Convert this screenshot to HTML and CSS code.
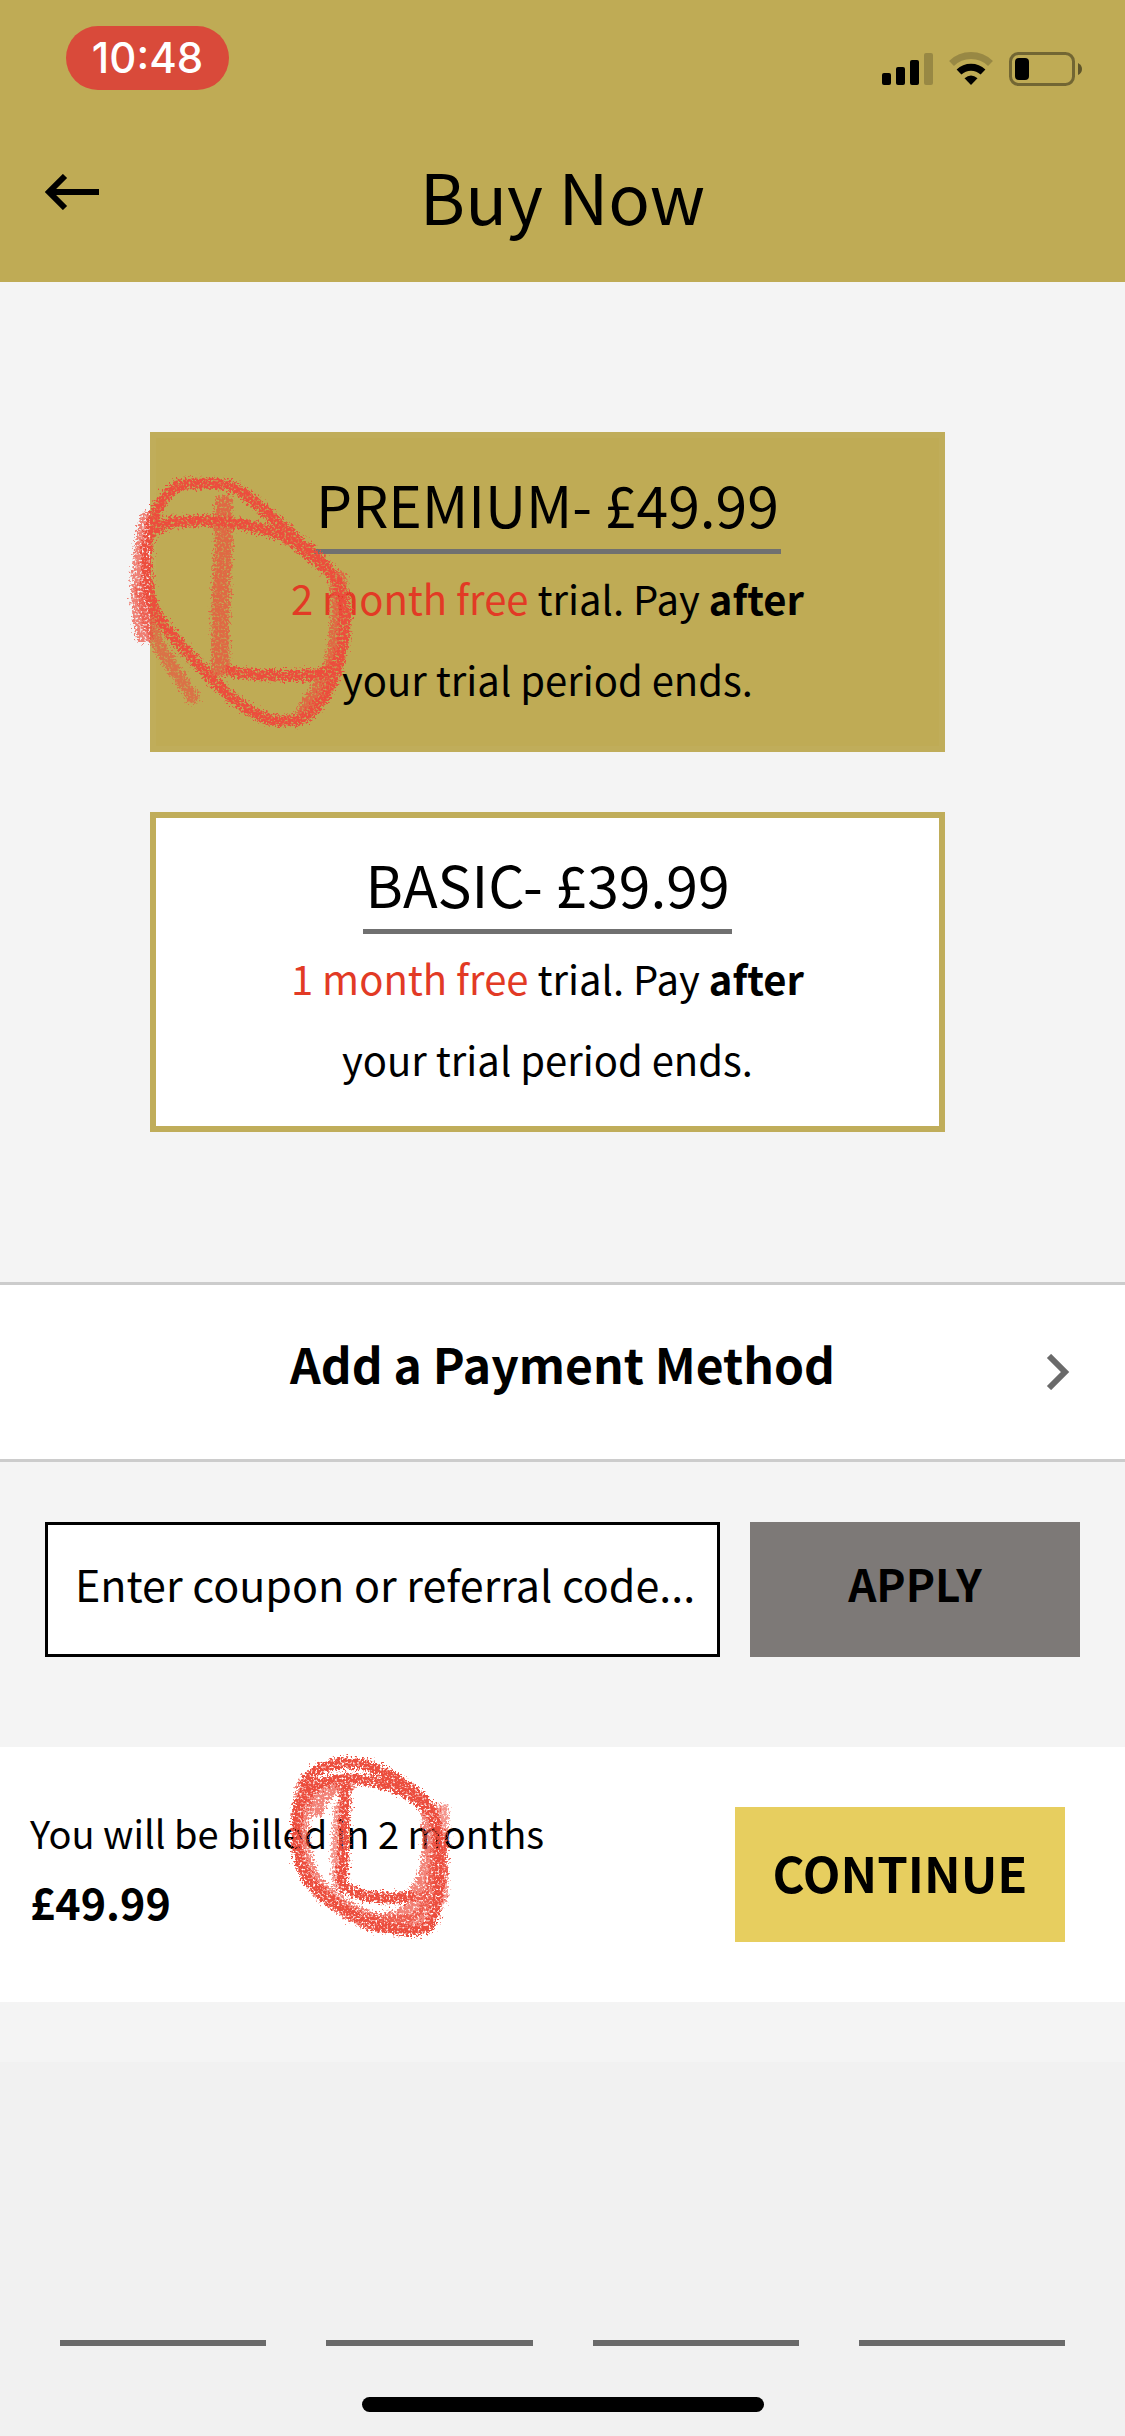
FILE: index.html
```html
<!DOCTYPE html>
<html lang="en">
<head>
<meta charset="utf-8">
<meta name="viewport" content="width=device-width, initial-scale=1">
<title>Buy Now</title>
<link rel="stylesheet" href="styles.css">
</head>
<body>
<div class="page">
  <header class="header">
    <div class="status">
      <span class="clock">10:48</span>
      <div class="status-icons">
        <svg width="51" height="34" viewBox="0 0 51 34" aria-hidden="true">
          <rect x="0" y="21" width="9" height="12" rx="2"/>
          <rect x="14" y="15" width="9" height="18" rx="2"/>
          <rect x="28" y="8" width="9" height="25" rx="2"/>
          <rect x="42" y="1" width="9" height="32" rx="2" opacity=".2"/>
        </svg>
        <svg width="44" height="34" viewBox="0 0 44 34" aria-hidden="true">
          <path d="M2.500 11.500 A28 28 0 0 1 41.500 11.500" fill="none" stroke="#000" stroke-width="7" opacity=".2"/>
          <path d="M10 20 A17.500 17.500 0 0 1 34 20" fill="none" stroke="#000" stroke-width="7"/>
          <path d="M22 33 L15.500 26.300 Q22 20.500 28.500 26.300 Z"/>
        </svg>
        <svg width="73" height="34" viewBox="0 0 73 34" aria-hidden="true">
          <rect x="1.500" y="1.500" width="63" height="31" rx="8" fill="none" stroke="#000" stroke-width="3" opacity=".4"/>
          <rect x="6" y="6" width="14" height="22" rx="4"/>
          <path d="M69 11 Q73 13 73 17 Q73 21 69 23 Z" opacity=".5"/>
        </svg>
      </div>
    </div>
    <div class="titlebar">
      <button class="back" type="button" aria-label="Back">
        <svg width="54" height="36" viewBox="0 0 54 36" aria-hidden="true">
          <path d="M54 18 H5 M20 2 L4 18 L20 34" fill="none" stroke="#000" stroke-width="6"/>
        </svg>
      </button>
      <h1 class="title">Buy Now</h1>
    </div>
  </header>

  <main class="main">
    <section class="plans">
      <div class="plan-slot">
        <button class="plan plan-selected" type="button">
          <span class="plan-name">PREMIUM- £49.99</span>
          <span class="plan-text"><span class="free">2 month free</span> trial. Pay <b>after</b><br>your trial period ends.</span>
        </button>
        <svg class="mark mark-plan" width="260" height="270" viewBox="120 465 260 270" aria-hidden="true">
          <defs>
            <filter id="crayon" x="-10%" y="-10%" width="120%" height="120%" color-interpolation-filters="sRGB">
              <feTurbulence type="fractalNoise" baseFrequency="0.45" numOctaves="2" seed="4" result="noise"/>
              <feDisplacementMap in="SourceGraphic" in2="noise" scale="14" xChannelSelector="R" yChannelSelector="G" result="rough"/>
              <feColorMatrix in="noise" type="matrix" values="0 0 0 0 0  0 0 0 0 0  0 0 0 0 0  0 0 4 0 -0.900" result="grain"/>
              <feComposite in="rough" in2="grain" operator="in"/>
            </filter>
          </defs>
          <g filter="url(#crayon)">
            <path class="solid" d="M151 535 C158 523 170 522 190 521 C215 519 250 524 276 533 C292 539 310 555 325 568 C345 585 347 605 345 625 C344 650 340 665 325 673 C300 677 250 676 230 671"/>
            <path class="solid" d="M146 560 C148 520 160 495 180 485 C195 482 220 483 231 486 C250 495 275 520 300 542 C325 562 343 580 344 610 C345 640 340 675 322 700 C310 715 302 722 288 721 C265 722 245 710 225 692 C200 667 175 640 160 620 C150 605 147 590 146 550"/>
            <path class="wide" d="M224 504 C225 550 218 600 221 668"/>
            <path class="wide" d="M149 520 C139 560 138 600 144 634"/>
            <path class="wide" d="M338 580 C342 610 340 650 328 676 L306 712"/>
            <path class="soft" d="M143 590 C146 630 160 650 193 697"/>
          </g>
        </svg>
      </div>
      <button class="plan" type="button">
        <span class="plan-name">BASIC- £39.99</span>
        <span class="plan-text"><span class="free">1 month free</span> trial. Pay <b>after</b><br>your trial period ends.</span>
      </button>
    </section>

    <button class="payment" type="button">
      <span>Add a Payment Method</span>
      <svg class="chevron" width="24" height="36" viewBox="0 0 24 36" aria-hidden="true">
        <path d="M3 2 L19 18 L3 34" fill="none" stroke="#6a6a6a" stroke-width="6"/>
      </svg>
    </button>

    <form class="coupon">
      <input class="code" type="text" aria-label="Coupon or referral code" placeholder="Enter coupon or referral code...">
      <button class="apply" type="button">APPLY</button>
    </form>

    <section class="billing">
      <div class="bill">
        <p class="bill-note">You will be billed in 2 months</p>
        <p class="bill-price">£49.99</p>
      </div>
      <button class="continue" type="button">CONTINUE</button>
      <svg class="mark mark-bill" width="190" height="205" viewBox="280 1745 190 205" aria-hidden="true">
        <g filter="url(#crayon)">
          <path class="solid" d="M305 1785 C315 1768 325 1764 345 1763 C375 1762 395 1778 412 1790 C430 1803 438 1820 439 1845 C440 1880 439 1912 430 1924 C424 1932 405 1932 385 1927 C355 1919 325 1900 309 1880 C298 1862 295 1840 297 1815 C300 1790 325 1777 352 1779 C385 1780 415 1793 430 1812"/>
          <path class="solid" d="M345 1787 C346 1830 341 1870 343 1885 C352 1896 380 1900 410 1897"/>
          <path class="wide" d="M308 1782 C295 1820 298 1860 314 1882 C330 1902 350 1912 372 1922"/>
          <path class="wide" d="M316 1808 C318 1795 330 1786 348 1782"/>
          <path class="wide" d="M430 1812 C434 1850 430 1880 418 1892"/>
          <path class="wide" d="M439 1850 C438 1880 436 1908 420 1920 C400 1926 385 1925 370 1922"/>
          <path class="wide" d="M424 1900 C412 1914 400 1920 384 1922"/>
          <path class="soft" d="M340 1808 C338 1850 336 1870 340 1884"/>
          <path class="soft" d="M442 1810 L441 1900"/>
        </g>
      </svg>
    </section>
  </main>

  <footer class="footer">
    <nav class="tabs" aria-label="Sections">
      <span class="tab"></span><span class="tab"></span><span class="tab"></span><span class="tab"></span>
    </nav>
    <div class="home"></div>
  </footer>
</div>
</body>
</html>
```
FILE: styles.css
```css
* { box-sizing: border-box; }

body {
  margin: 0;
  background: #f4f4f4;
  color: #000;
  font-family: "Noto Sans CJK JP", "Noto Sans", sans-serif;
}

button, input {
  margin: 0;
  padding: 0;
  border: 0;
  border-radius: 0;
  background: none;
  color: inherit;
  font: inherit;
}

button { cursor: pointer; }
h1, p { margin: 0; }
svg { display: block; }

.page {
  display: flex;
  flex-direction: column;
  min-height: 100vh;
}

/* Header */
.header {
  padding-bottom: 39px;
  background: #bfab55;
}

.status {
  display: flex;
  justify-content: space-between;
  padding: 26px 43px 0 66px;
}

.clock {
  width: 163px;
  height: 64px;
  border-radius: 32px;
  background: #d94a3a;
  color: #fff;
  font: 500 42px/64px Inter, sans-serif;
  text-align: center;
}

.status-icons {
  display: flex;
  gap: 16px;
  padding-top: 26px;
}

.titlebar {
  display: grid;
  grid-template-columns: 1fr auto 1fr;
  align-items: start;
  margin-top: 57px;
  padding: 0 45px;
}

.back {
  display: flex;
  align-items: center;
  justify-self: start;
  height: 90px;
}

.title {
  font-size: 69px;
  font-weight: 400;
  line-height: 96px;
}

/* Plans */
.plans {
  display: flex;
  flex-direction: column;
  gap: 60px;
  padding: 150px 180px 150px 150px;
}

.plan-slot { position: relative; }

.plan {
  display: flex;
  flex-direction: column;
  align-items: center;
  gap: 4px;
  width: 100%;
  padding: 25px 24px 26px;
  border: 6px solid #c0ad5a;
  background: #fff;
}

.plan-selected { background: #bfab55; }

.plan-name {
  padding: 0 2px 6px;
  border-bottom: 5px solid #707070;
  font-size: 57px;
  line-height: 80px;
}

.plan-text {
  font-size: 40px;
  line-height: 81px;
}

.free { color: #e23a25; }

/* Hand-drawn marks over the page */
.mark {
  position: absolute;
  pointer-events: none;
}

.mark path {
  fill: none;
  stroke: #ec4d3d;
  stroke-linecap: round;
  stroke-linejoin: round;
}

.mark .solid { stroke-width: 11px; }
.mark .wide { stroke-width: 18px; opacity: .7; }
.mark .soft { stroke-width: 13px; opacity: .6; }
.mark-plan { left: -30px; top: 33px; }
.mark-bill { left: 280px; top: -2px; }

/* Payment method */
.payment {
  display: grid;
  grid-template-columns: 1fr auto 1fr;
  align-items: center;
  width: 100%;
  height: 180px;
  padding: 0 55px;
  border-top: 3px solid #ccc;
  border-bottom: 3px solid #ccc;
  background: #fff;
  font-size: 48px;
  font-weight: 700;
}

.payment span {
  grid-column: 2;
  padding-bottom: 18px;
}

.chevron { justify-self: end; }

/* Coupon */
.coupon {
  display: grid;
  grid-template-columns: 1fr 330px;
  gap: 30px;
  padding: 60px 45px 90px;
}

.code {
  width: 100%;
  height: 135px;
  padding: 0 20px 14px 27px;
  border: 3px solid #000;
  background: #fff;
  font-size: 43px;
}

.code::placeholder { color: #000; opacity: 1; }

.apply {
  padding-bottom: 14px;
  background: #7d7977;
  font-size: 44px;
  font-weight: 700;
}

/* Billing */
.billing {
  position: relative;
  display: flex;
  justify-content: space-between;
  align-items: flex-start;
  padding: 60px 60px 60px 30px;
  background: #fff;
}

.bill {
  display: flex;
  flex-direction: column;
  gap: 10px;
}

.bill-note { font-size: 38px; line-height: 52px; }
.bill-price { font-size: 43px; font-weight: 700; line-height: 64px; }

.continue {
  width: 330px;
  height: 135px;
  padding-bottom: 6px;
  background: #e7ce5f;
  font-size: 49px;
  font-weight: 700;
}

/* Footer */
.footer {
  display: flex;
  flex-direction: column;
  align-items: center;
  gap: 51px;
  margin-top: 60px;
  padding: 278px 60px 24px;
  background: #f1f1f1;
}

.tabs {
  display: grid;
  grid-template-columns: repeat(4, 1fr);
  gap: 60px;
  width: 100%;
}

.tab { height: 6px; background: #6a6a6a; }

.home {
  width: 402px;
  height: 15px;
  border-radius: 8px;
  background: #000;
}
```
